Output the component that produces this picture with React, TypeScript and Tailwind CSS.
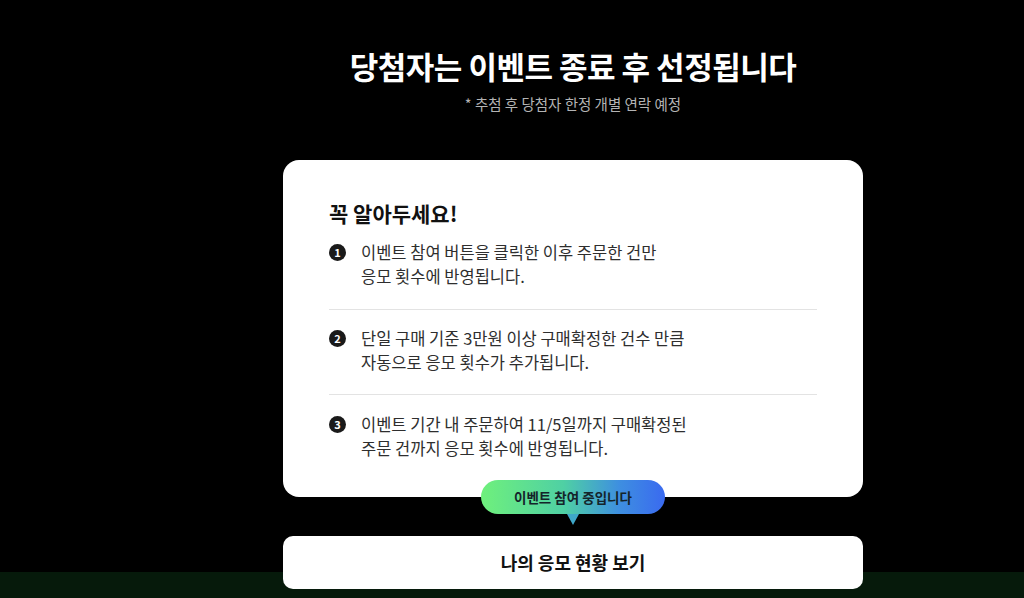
import React from "react";

const font = { fontFamily: '"Noto Sans CJK KR", "Noto Sans", sans-serif' };

function Num({ n }: { n: number }) {
  return (
    <span className="mt-[4px] flex h-[17px] w-[17px] shrink-0 items-center justify-center rounded-full bg-[#1a1a1a] text-[11px] font-bold leading-none text-white">
      {n}
    </span>
  );
}

function Item({ n, lines, className }: { n: number; lines: string[]; className: string }) {
  return (
    <div className={"flex gap-[15px] " + className}>
      <Num n={n} />
      <p className="text-[16.5px] leading-[24px] text-[#2e2e2e]">
        {lines[0]}
        <br />
        {lines[1]}
      </p>
    </div>
  );
}

export default function App() {
  return (
    <div className="h-[598px] w-full overflow-hidden bg-black" style={font}>
      <div className="flex h-[572px] flex-col items-center bg-black pl-[122px]">
        <h1 className="mt-[46px] text-[31px] font-bold leading-[40px] tracking-[-0.5px] text-white">
          당첨자는 이벤트 종료 후 선정됩니다
        </h1>
        <p className="mt-[8px] text-[14.5px] leading-[20px] text-[#b4b4b4]">* 추첨 후 당첨자 한정 개별 연락 예정</p>

        <div className="mt-[46px] w-[580px] rounded-[16px] bg-white px-[46px] pb-[37px] pt-[39px]">
          <h2 className="text-[21px] font-bold leading-[28px] text-[#111]">꼭 알아두세요!</h2>
          <Item
            n={1}
            className="mt-[13px] border-b border-[#e3e3e3] pb-[21px]"
            lines={["이벤트 참여 버튼을 클릭한 이후 주문한 건만", "응모 횟수에 반영됩니다."]}
          />
          <Item
            n={2}
            className="border-b border-[#e3e3e3] pb-[20px] pt-[16px]"
            lines={["단일 구매 기준 3만원 이상 구매확정한 건수 만큼", "자동으로 응모 횟수가 추가됩니다."]}
          />
          <Item
            n={3}
            className="pt-[17px]"
            lines={["이벤트 기간 내 주문하여 11/5일까지 구매확정된", "주문 건까지 응모 횟수에 반영됩니다."]}
          />
        </div>

        <div className="relative z-10 -mt-[17px] flex flex-col items-center">
          <div className="flex h-[34px] w-[184px] items-center justify-center rounded-[17px] bg-[linear-gradient(90deg,#6ff07c_0%,#4fd0a4_45%,#3e8fe0_75%,#3a6af0_100%)] text-[13.5px] font-bold text-[#14242a]">
            이벤트 참여 중입니다
          </div>
          <div className="h-0 w-0 border-x-[6px] border-t-[11px] border-x-transparent border-t-[#3fa7c8]" />
        </div>

        <button className="relative z-10 mt-[11px] flex h-[53px] w-[580px] shrink-0 items-center justify-center rounded-[10px] bg-white text-[18px] font-bold text-[#111]">
          나의 응모 현황 보기
        </button>
      </div>
      <div className="h-[26px] bg-[#061a0b]" />
    </div>
  );
}
